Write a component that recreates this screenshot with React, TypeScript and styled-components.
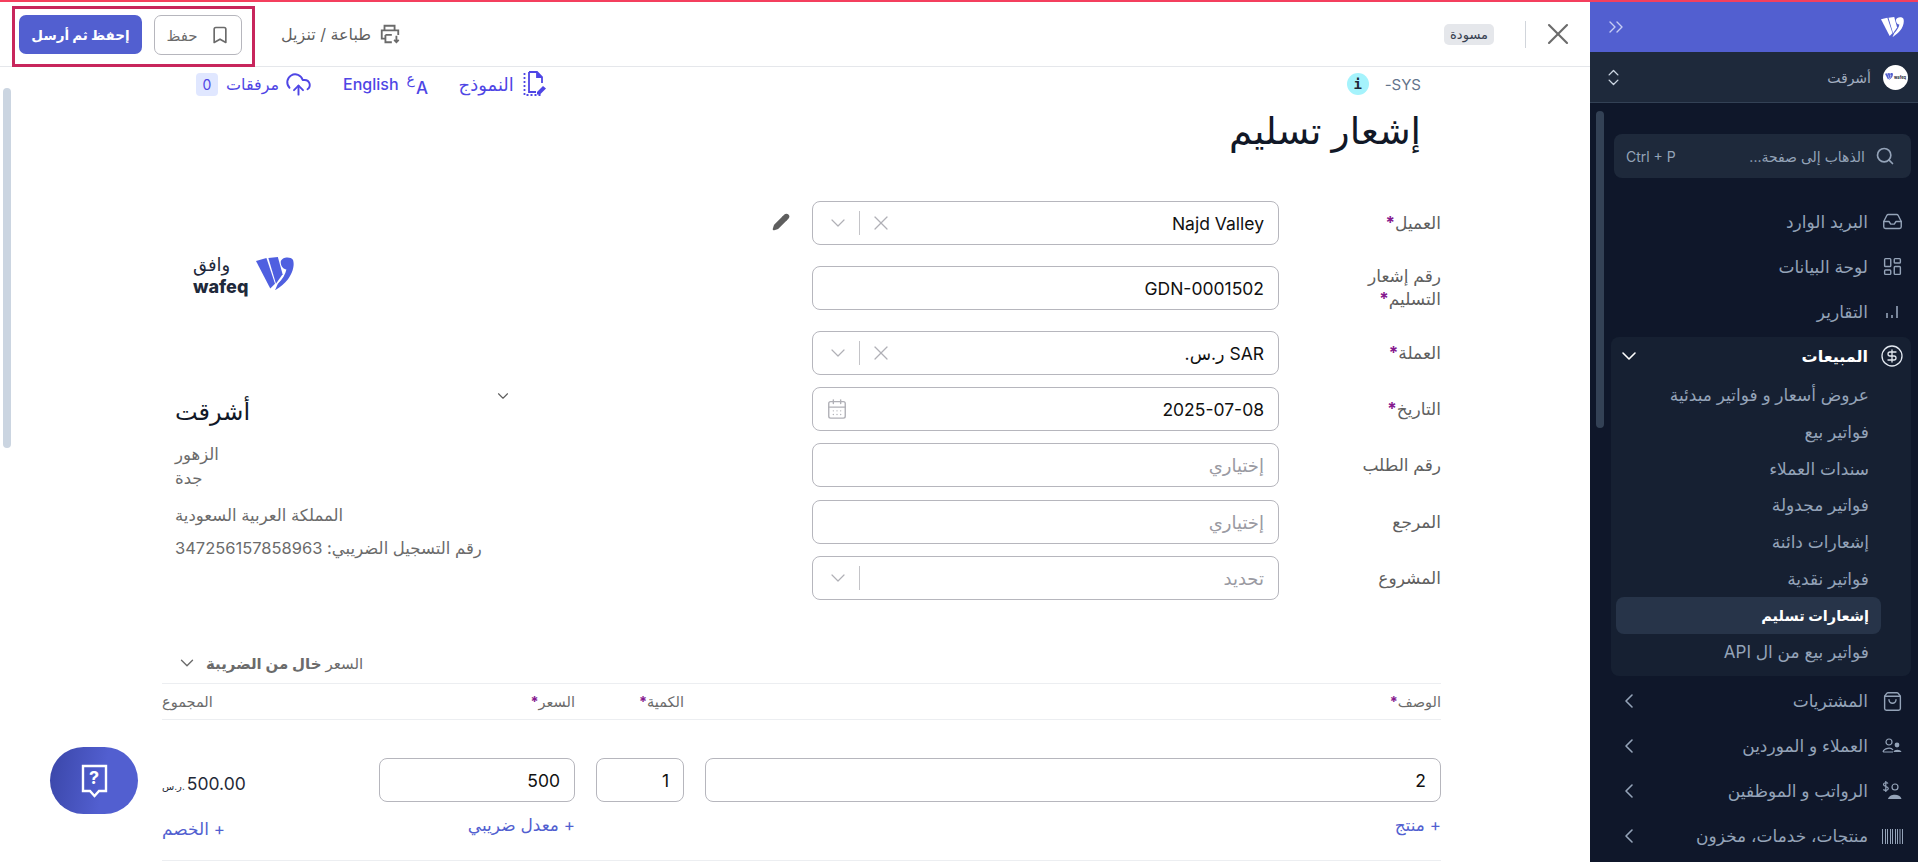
import styled, { createGlobalStyle } from 'styled-components';
import {
    Bookmark,
    CalendarDays,
    ChevronDown,
    ChevronLeft,
    ChevronsRight,
    ChevronsUpDown,
    CircleDollarSign,
    CloudUpload,
    Inbox,
    LayoutDashboard,
    Pencil,
    Search,
    ShoppingBag,
    X,
} from 'lucide-react';
import type { ReactNode } from 'react';

const GlobalStyle = createGlobalStyle`
    html, body {
        margin: 0;
        padding: 0;
        height: 100%;
        overflow: hidden;
        background: #fff;
    }
    * {
        box-sizing: border-box;
    }
    body {
        font-family: 'Inter', 'Noto Sans', 'DejaVu Sans', sans-serif;
    }
`;

// wafeq mark, drawn from the logo
const WafeqMark = ({ size, color }: { size: number; color: string }) => (
    <svg width={size} height={size * 0.88} viewBox="0 0 40 35" fill={color}>
        <path d="M0 4 L11 1 L20 28 L15 33 Z" />
        <path d="M13 1 L23 0 L28 18 L21 28 Z" />
        <path d="M26 5 C27 0 36 -1 39 3 C41 9 38 18 33 24 C30 28 26 31 20 35 L23 28 C28 23 31 18 32 13 C29 13 26 10 26 5 Z" />
    </svg>
);

const PrintDownloadIcon = () => (
    <svg width="22" height="22" viewBox="0 0 24 24" fill="none" stroke="#6b6b6b" strokeWidth="2">
        <path d="M6 8V3h11v5" />
        <path d="M7 17H3V8h18v5" />
        <path d="M7 13h7M7 13v8h7" />
        <path d="M19 14v7M16.5 18.5 19 21l2.5-2.5" />
    </svg>
);

const FormFileIcon = () => (
    <svg width="24" height="26" viewBox="0 0 24 26" fill="none" stroke="#4f46e5" strokeWidth="1.8">
        <path d="M7 1h8l5 5v6" />
        <path d="M15 1v5h5" fill="#4f46e5" />
        <path d="M7 1v20h7" />
        <path d="M2.500 2v22h16" strokeDasharray="2 2" />
        <path d="M15 21l6-6 3 2.500-6 6h-3z" fill="#4f46e5" stroke="none" />
    </svg>
);

const BarsIcon = () => (
    <svg width="16" height="16" viewBox="0 0 16 16" fill="none" stroke="#94a3b8" strokeWidth="1.6">
        <path d="M3 9v5M8 11v3M13 2v12" />
    </svg>
);

const BarcodeIcon = () => (
    <svg width="21" height="15" viewBox="0 0 21 15" fill="none" stroke="#94a3b8" strokeWidth="1">
        <path d="M.5 0v15M3.500 0v15M5.500 0v15M8.500 0v15M10.500 0v15M13.500 0v15M15.500 0v15M18 0v15M20.500 0v15" />
    </svg>
);

const CustomersIcon = () => (
    <svg width="20" height="16" viewBox="0 0 20 16" fill="none" stroke="#94a3b8" strokeWidth="1.2">
        <circle cx="7" cy="4" r="3" />
        <path d="M1 14c1-4 8-5 10-2M1 14h10" />
        <circle cx="15" cy="7" r="2.400" fill="#94a3b8" stroke="none" />
        <path d="M11.500 14c.5-3 7-3 8 0z" fill="#94a3b8" stroke="none" />
    </svg>
);

const PayrollIcon = () => (
    <svg width="20" height="20" viewBox="0 0 20 20" fill="none" stroke="#94a3b8" strokeWidth="1.2">
        <path d="M6 2.500C5 1.200 1.500 1.500 1.500 3.600c0 2.400 4.800 1.500 4.800 4 0 2-3.600 2.300-5 .9M3.800 0v11" />
        <circle cx="13" cy="6" r="3" />
        <path d="M6 18c1-5 12-6 13.500 0z" fill="#94a3b8" stroke="none" />
    </svg>
);

const HelpBubbleIcon = () => (
    <HelpGlyph>
        <svg width="27" height="34" viewBox="0 0 27 34" fill="none" stroke="#fff" strokeWidth="2.400">
            <path d="M2 2h23v25h-7l-4.500 5-4.500-5H2z" />
        </svg>
        <HelpMark>?</HelpMark>
    </HelpGlyph>
);

type NavEntry = { label: string; icon: ReactNode };

const topNav: NavEntry[] = [
    { label: 'البريد الوارد', icon: <Inbox size={21} strokeWidth={1.6} /> },
    { label: 'لوحة البيانات', icon: <LayoutDashboard size={21} strokeWidth={1.6} /> },
    { label: 'التقارير', icon: <BarsIcon /> },
];

const salesItems = [
    'عروض أسعار و فواتير مبدئية',
    'فواتير بيع',
    'سندات العملاء',
    'فواتير مجدولة',
    'إشعارات دائنة',
    'فواتير نقدية',
    'إشعارات تسليم',
    'فواتير بيع من ال API',
];

const bottomNav: NavEntry[] = [
    { label: 'المشتريات', icon: <ShoppingBag size={21} strokeWidth={1.6} /> },
    { label: 'العملاء و الموردين', icon: <CustomersIcon /> },
    { label: 'الرواتب و الموظفين', icon: <PayrollIcon /> },
    { label: 'منتجات، خدمات، مخزون', icon: <BarcodeIcon /> },
];

const SelectControls = ({ clearable }: { clearable?: boolean }) => (
    <Controls>
        {clearable && <X size={24} strokeWidth={1.2} />}
        <ControlDivider />
        <ChevronDown size={24} strokeWidth={1.2} />
    </Controls>
);

const App = () => {
    return (
        <Page dir="rtl">
            <GlobalStyle />
            <TopLine />
            <Shell>
                <Sidebar>
                    <BrandBar>
                        <WafeqMark size={23} color="#fff" />
                        <ChevronsRight size={24} strokeWidth={1.4} color="#c7cdf3" />
                    </BrandBar>
                    <AccountBar>
                        <Avatar>
                            <AvatarWord dir="ltr">wafeq</AvatarWord>
                            <WafeqMark size={8} color="#525fd0" />
                        </Avatar>
                        <AccountName>أشرقت</AccountName>
                        <ChevronsUpDown size={21} strokeWidth={1.6} color="#cbd5e1" />
                    </AccountBar>
                    <NavScroll>
                        <SideThumb />
                        <SearchBox>
                            <Search size={20} />
                            <SearchText>الذهاب إلى صفحة...</SearchText>
                            <Shortcut dir="ltr">Ctrl + P</Shortcut>
                        </SearchBox>
                        <NavList>
                            {topNav.map((entry) => (
                                <NavItem key={entry.label}>
                                    <NavIcon>{entry.icon}</NavIcon>
                                    <NavLabel>{entry.label}</NavLabel>
                                </NavItem>
                            ))}
                            <SalesGroup>
                                <SalesHead>
                                    <NavIcon>
                                        <CircleDollarSign size={24} color="#e2e8f0" strokeWidth={1.3} />
                                    </NavIcon>
                                    <SalesLabel>المبيعات</SalesLabel>
                                    <ChevronDown size={24} color="#fff" strokeWidth={1.6} />
                                </SalesHead>
                                {salesItems.map((label) => (
                                    <SubItem key={label} $active={label === 'إشعارات تسليم'}>
                                        {label}
                                    </SubItem>
                                ))}
                            </SalesGroup>
                            {bottomNav.map((entry) => (
                                <NavItem key={entry.label}>
                                    <NavIcon>{entry.icon}</NavIcon>
                                    <NavLabel>{entry.label}</NavLabel>
                                    <ChevronLeft size={24} color="#94a3b8" strokeWidth={1.6} />
                                </NavItem>
                            ))}
                        </NavList>
                    </NavScroll>
                </Sidebar>

                <Main>
                    <MainThumb />
                    <Header>
                        <CloseButton>
                            <X size={36} strokeWidth={1.4} />
                        </CloseButton>
                        <HeaderDivider />
                        <DraftBadge>مسودة</DraftBadge>
                        <HeaderActions>
                            <PrintLink>
                                <PrintDownloadIcon />
                                طباعة / تنزيل
                            </PrintLink>
                            <HighlightBox>
                                <SaveButton>
                                    <Bookmark size={20} strokeWidth={2} />
                                    حفظ
                                </SaveButton>
                                <SendButton>إحفظ ثم أرسل</SendButton>
                            </HighlightBox>
                        </HeaderActions>
                    </Header>

                    <Content>
                        <MetaRow>
                            <SysRef>
                                <span>SYS-</span>
                                <InfoDot>i</InfoDot>
                            </SysRef>
                            <MetaLinks>
                                <MetaLink $size={18}>
                                    <FormFileIcon />
                                    النموذج
                                </MetaLink>
                                <MetaLink>
                                    <LangGlyph>
                                        <LangAr>ع</LangAr>
                                        <LangEn>A</LangEn>
                                    </LangGlyph>
                                    English
                                </MetaLink>
                                <MetaLink $gap={6}>
                                    <CloudUpload size={27} strokeWidth={1.7} />
                                    مرفقات
                                    <CountBadge>0</CountBadge>
                                </MetaLink>
                            </MetaLinks>
                        </MetaRow>

                        <Title>إشعار تسليم</Title>

                        <FormGrid>
                            <FormColumn>
                                <FieldRow $after={21}>
                                    <FieldLabel>
                                        العميل<Req>*</Req>
                                    </FieldLabel>
                                    <InputBox>
                                        <Value>Najd Valley</Value>
                                        <SelectControls clearable />
                                    </InputBox>
                                    <EditSlot>
                                        <Pencil size={18} fill="#5f5f5f" stroke="#5f5f5f" />
                                    </EditSlot>
                                </FieldRow>
                                <FieldRow $after={21}>
                                    <FieldLabel>
                                        رقم إشعار التسليم<Req>*</Req>
                                    </FieldLabel>
                                    <InputBox>
                                        <Value>GDN-0001502</Value>
                                    </InputBox>
                                </FieldRow>
                                <FieldRow $after={12}>
                                    <FieldLabel>
                                        العملة<Req>*</Req>
                                    </FieldLabel>
                                    <InputBox>
                                        <Value>SAR ر.س.</Value>
                                        <SelectControls clearable />
                                    </InputBox>
                                </FieldRow>
                                <FieldRow $after={12}>
                                    <FieldLabel>
                                        التاريخ<Req>*</Req>
                                    </FieldLabel>
                                    <InputBox>
                                        <Value>2025-07-08</Value>
                                        <Controls>
                                            <CalendarDays size={22} strokeWidth={1.5} />
                                        </Controls>
                                    </InputBox>
                                </FieldRow>
                                <FieldRow $after={13}>
                                    <FieldLabel>رقم الطلب</FieldLabel>
                                    <InputBox>
                                        <Placeholder>إختياري</Placeholder>
                                    </InputBox>
                                </FieldRow>
                                <FieldRow $after={12}>
                                    <FieldLabel>المرجع</FieldLabel>
                                    <InputBox>
                                        <Placeholder>إختياري</Placeholder>
                                    </InputBox>
                                </FieldRow>
                                <FieldRow $after={0}>
                                    <FieldLabel>المشروع</FieldLabel>
                                    <InputBox>
                                        <Placeholder>تحديد</Placeholder>
                                        <SelectControls />
                                    </InputBox>
                                </FieldRow>
                            </FormColumn>

                            <CompanyColumn>
                                <LogoRow>
                                    <WafeqMark size={38} color="#4f5fe0" />
                                    <LogoWords>
                                        <LogoAr>وافق</LogoAr>
                                        <LogoEn dir="ltr">wafeq</LogoEn>
                                    </LogoWords>
                                </LogoRow>
                                <CompanyChevron>
                                    <ChevronDown size={18} strokeWidth={1.5} />
                                </CompanyChevron>
                                <CompanyName>أشرقت</CompanyName>
                                <CompanyLine>الزهور</CompanyLine>
                                <CompanyLine>جدة</CompanyLine>
                                <CompanyLine $top={13}>المملكة العربية السعودية</CompanyLine>
                                <CompanyLine $top={9}>رقم التسجيل الضريبي: 347256157858963</CompanyLine>
                            </CompanyColumn>
                        </FormGrid>

                        <TaxToggle>
                            السعر <strong>خال من الضريبة</strong>
                            <ChevronDown size={22} strokeWidth={1.5} />
                        </TaxToggle>

                        <LinesHead>
                            <span>
                                الوصف<Req>*</Req>
                            </span>
                            <span>
                                الكمية<Req>*</Req>
                            </span>
                            <span>
                                السعر<Req>*</Req>
                            </span>
                            <span />
                            <span>المجموع</span>
                        </LinesHead>

                        <LineRow>
                            <LineCell>
                                <InputBox>
                                    <Value>2</Value>
                                </InputBox>
                                <AddLink>+ منتج</AddLink>
                            </LineCell>
                            <LineCell>
                                <InputBox>
                                    <Value>1</Value>
                                </InputBox>
                            </LineCell>
                            <LineCell>
                                <InputBox>
                                    <Value>500</Value>
                                </InputBox>
                                <AddLink>+ معدل ضريبي</AddLink>
                            </LineCell>
                            <span />
                            <LineCell>
                                <TotalValue dir="ltr">
                                    <small>ر.س.</small>500.00
                                </TotalValue>
                                <DiscountLink>+ الخصم</DiscountLink>
                            </LineCell>
                        </LineRow>
                    </Content>

                    <HelpButton>
                        <HelpBubbleIcon />
                    </HelpButton>
                </Main>
            </Shell>
        </Page>
    );
};

const Page = styled.div`
    width: 1918px;
    height: 862px;
    overflow: hidden;
    display: flex;
    flex-direction: column;
`;
const TopLine = styled.div`
    height: 2px;
    flex: none;
    background: #f43f5e;
`;
const Shell = styled.div`
    flex: 1;
    min-height: 0;
    display: flex;
`;
const Sidebar = styled.aside`
    width: 328px;
    flex: none;
    background: #0f172a;
    display: flex;
    flex-direction: column;
`;
const BrandBar = styled.div`
    height: 50px;
    flex: none;
    background: #525fd0;
    display: flex;
    align-items: center;
    justify-content: space-between;
    padding-inline: 14px;
`;
const AccountBar = styled.div`
    height: 51px;
    flex: none;
    background: #1e293b;
    border-bottom: 1px solid #334155;
    display: flex;
    align-items: center;
    gap: 12px;
    padding-inline: 10px 13px;
`;
const Avatar = styled.div`
    width: 25px;
    height: 25px;
    border-radius: 50%;
    background: #fff;
    display: flex;
    align-items: center;
    justify-content: center;
    gap: 1px;
`;
const AvatarWord = styled.span`
    font-size: 4px;
    font-weight: 700;
    color: #1e293b;
`;
const AccountName = styled.div`
    flex: 1;
    font-size: 14px;
    color: #a3aec0;
`;
const NavScroll = styled.div`
    position: relative;
    flex: 1;
    min-height: 0;
    padding: 31px 7px 0 7px;
`;
const SideThumb = styled.div`
    position: absolute;
    left: 6px;
    top: 8px;
    width: 8px;
    height: 317px;
    border-radius: 4px;
    background: #334155;
`;
const SearchBox = styled.div`
    height: 44px;
    margin-inline: 0 17px;
    display: flex;
    align-items: center;
    gap: 10px;
    padding-inline: 16px 12px;
    border-radius: 8px;
    background: #1e293b;
    color: #94a3b8;
`;
const SearchText = styled.div`
    flex: 1;
    font-size: 14px;
`;
const Shortcut = styled.div`
    font-size: 14px;
`;
const NavList = styled.div`
    margin-top: 21px;
    display: flex;
    flex-direction: column;
`;
const NavItem = styled.div`
    height: 45px;
    display: flex;
    align-items: center;
    gap: 12px;
    padding-inline: 7px 3px;
    margin-inline: 0 17px;
    color: #94a3b8;
`;
const NavIcon = styled.span`
    width: 24px;
    flex: none;
    display: flex;
    align-items: center;
    justify-content: center;
`;
const NavLabel = styled.span`
    flex: 1;
    font-size: 17px;
`;
const SalesLabel = styled.span`
    flex: 1;
    font-size: 16px;
`;
const SalesGroup = styled.div`
    margin: 3px 0;
    margin-inline: 0 14px;
    padding-bottom: 5px;
    border-radius: 8px;
    background: #162032;
`;
const SalesHead = styled.div`
    height: 38px;
    margin-bottom: 2px;
    display: flex;
    align-items: center;
    gap: 12px;
    padding-inline: 7px 6px;
    color: #fff;
    font-weight: 600;
`;
const SubItem = styled.div<{ $active?: boolean }>`
    height: 36.7px;
    margin-inline: 30px 5px;
    padding-inline: 12px;
    border-radius: 8px;
    display: flex;
    align-items: center;
    font-size: ${({ $active }) => ($active ? 14.5 : 17)}px;
    font-weight: ${({ $active }) => ($active ? 600 : 400)};
    color: ${({ $active }) => ($active ? '#fff' : '#94a3b8')};
    background: ${({ $active }) => ($active ? '#273449' : 'transparent')};
`;
const Main = styled.main`
    position: relative;
    flex: 1;
    min-width: 0;
    display: flex;
    flex-direction: column;
`;
const MainThumb = styled.div`
    position: absolute;
    left: 3px;
    top: 86px;
    width: 8px;
    height: 360px;
    border-radius: 4px;
    background: #cbd5e1;
`;
const Header = styled.header`
    height: 65px;
    flex: none;
    border-bottom: 1px solid #e5e7eb;
    display: flex;
    align-items: center;
    padding-inline: 14px 12px;
`;
const CloseButton = styled.div`
    display: flex;
    color: #6b6b6b;
`;
const HeaderDivider = styled.div`
    width: 1px;
    height: 27px;
    margin-inline: 14px 31px;
    background: #d1d5db;
`;
const DraftBadge = styled.div`
    width: 50px;
    height: 21px;
    border-radius: 5px;
    background: #e5e7eb;
    color: #374151;
    font-size: 13px;
    display: flex;
    align-items: center;
    justify-content: center;
`;
const HeaderActions = styled.div`
    margin-inline-start: auto;
    align-self: stretch;
    display: flex;
    align-items: center;
    gap: 26px;
`;
const PrintLink = styled.div`
    display: flex;
    align-items: center;
    gap: 8px;
    color: #5f5f5f;
    font-size: 16px;
`;
const HighlightBox = styled.div`
    align-self: flex-end;
    display: flex;
    align-items: flex-start;
    gap: 12px;
    height: 61px;
    margin-bottom: -1px;
    padding: 9px 13px 0 7px;
    outline: 3px solid #c8265c;
    outline-offset: -3px;
`;
const SaveButton = styled.div`
    width: 88px;
    height: 40px;
    border: 1px solid #b6b6bd;
    border-radius: 7px;
    display: flex;
    align-items: center;
    justify-content: center;
    gap: 12px;
    color: #6b6b6b;
    font-size: 15px;
`;
const SendButton = styled.div`
    width: 123px;
    height: 39px;
    border-radius: 7px;
    background: #525fd0;
    color: #fff;
    font-size: 13.5px;
    font-weight: 700;
    display: flex;
    align-items: center;
    justify-content: center;
`;
const Content = styled.div`
    padding-inline: 149px 162px;
    flex: 1;
    min-height: 0;
`;
const MetaRow = styled.div`
    height: 34px;
    display: flex;
    align-items: center;
    justify-content: space-between;
    padding-inline: 20px 0;
`;
const SysRef = styled.div`
    display: flex;
    align-items: center;
    gap: 16px;
    color: #64748b;
    font-size: 15px;
`;
const InfoDot = styled.span`
    width: 22px;
    height: 22px;
    border-radius: 50%;
    background: #a5f3fc;
    color: #1f2937;
    font-family: 'DejaVu Sans Mono', monospace;
    font-weight: 700;
    font-size: 14px;
    display: flex;
    align-items: center;
    justify-content: center;
`;
const MetaLinks = styled.div`
    display: flex;
    align-items: center;
    gap: 31px;
    margin-inline-end: 34px;
`;
const MetaLink = styled.div<{ $size?: number; $gap?: number }>`
    display: flex;
    align-items: center;
    gap: ${({ $gap }) => $gap ?? 8}px;
    color: #4f46e5;
    font-size: ${({ $size }) => $size ?? 16}px;
    font-weight: 500;
`;
const LangGlyph = styled.span`
    width: 21px;
    height: 24px;
    display: flex;
    direction: ltr;
`;
const LangAr = styled.span`
    font-size: 14px;
    line-height: 14px;
`;
const LangEn = styled.span`
    font-size: 17px;
    line-height: 16px;
    margin-top: 8px;
    margin-left: 1px;
`;
const CountBadge = styled.span`
    width: 22px;
    height: 23px;
    margin-inline-start: 2px;
    border-radius: 4px;
    background: #e0e7ff;
    display: flex;
    align-items: center;
    justify-content: center;
    font-size: 14px;
    font-weight: 400;
`;
const Title = styled.h1`
    margin: 5px 20px 0 0;
    height: 95px;
    font-size: 37.5px;
    font-weight: 500;
    line-height: 50px;
    color: #111827;
`;
const FormGrid = styled.div`
    display: flex;
    justify-content: space-between;
`;
const FormColumn = styled.div`
    width: 629px;
    display: flex;
    flex-direction: column;
`;
const FieldRow = styled.div<{ $after: number }>`
    position: relative;
    display: flex;
    align-items: center;
    height: 44px;
    margin-bottom: ${({ $after }) => $after}px;
`;
const FieldLabel = styled.label`
    width: 162px;
    flex: none;
    padding-inline-end: 60px;
    font-size: 17px;
    line-height: 23px;
    color: #5f5f5f;
`;
const Req = styled.span`
    color: #86198f;
    font-weight: 700;
`;
const InputBox = styled.div`
    flex: 1;
    min-width: 0;
    height: 44px;
    border: 1px solid #b6b6bd;
    border-radius: 8px;
    display: flex;
    align-items: center;
    justify-content: space-between;
    padding-inline: 14px 13px;
    background: #fff;
`;
const Value = styled.span`
    font-size: 17.5px;
    color: #111;
`;
const Placeholder = styled.span`
    font-size: 18px;
    color: #9a9aa2;
`;
const Controls = styled.span`
    display: flex;
    align-items: center;
    gap: 9px;
    color: #b0b0b6;
`;
const ControlDivider = styled.span`
    width: 1px;
    height: 24px;
    background: #c4c4c8;
`;
const EditSlot = styled.span`
    position: absolute;
    left: -40px;
    top: 12px;
    display: flex;
    color: #5f5f5f;
`;
const CompanyColumn = styled.div`
    position: relative;
    width: 336px;
    margin-inline-end: 13px;
    padding-top: 56px;
    text-align: left;
`;
const LogoRow = styled.div`
    height: 137px;
    display: flex;
    justify-content: flex-end;
    gap: 8px;
    margin-inline-end: 18px;
`;
const LogoWords = styled.div`
    display: flex;
    flex-direction: column;
    align-items: flex-end;
    margin-top: -4px;
    color: #1e293b;
`;
const LogoAr = styled.span`
    font-size: 18px;
    line-height: 24px;
`;
const LogoEn = styled.span`
    font-size: 18px;
    font-weight: 800;
    line-height: 20px;
`;
const CompanyChevron = styled.span`
    position: absolute;
    right: -1px;
    top: 186px;
    display: flex;
    color: #5f5f5f;
`;
const CompanyName = styled.div`
    font-size: 24px;
    font-weight: 500;
    line-height: 36px;
    color: #111827;
    margin-bottom: 12px;
`;
const CompanyLine = styled.div<{ $top?: number }>`
    font-size: 16.5px;
    line-height: 24px;
    color: #6b6b6b;
    margin-top: ${({ $top }) => $top ?? 0}px;
`;
const TaxToggle = styled.div`
    margin-top: 49px;
    height: 28px;
    display: flex;
    align-items: center;
    justify-content: flex-end;
    gap: 4px;
    padding-inline-end: 14px;
    font-size: 15px;
    color: #6b6b6b;
    strong {
        font-weight: 600;
    }
    svg {
        margin-inline-start: 4px;
    }
`;
const LinesHead = styled.div`
    margin-top: 6px;
    height: 37px;
    display: grid;
    grid-template-columns: 736px 88px 196px 1fr 86px;
    column-gap: 21px;
    align-items: center;
    border-block: 1px solid #eceef1;
    font-size: 14.5px;
    color: #6b6b6b;
    > :last-child {
        text-align: left;
    }
`;
const LineRow = styled.div`
    height: 141px;
    padding-top: 38px;
    display: grid;
    grid-template-columns: 736px 88px 196px 1fr 86px;
    column-gap: 21px;
    border-bottom: 1px solid #eceef1;
`;
const LineCell = styled.div`
    display: flex;
    flex-direction: column;
    ${InputBox} {
        flex: none;
    }
`;
const AddLink = styled.div`
    margin-top: 13px;
    font-size: 17px;
    line-height: 20px;
    color: #525fd0;
`;
const DiscountLink = styled(AddLink)`
    margin-top: 11px;
    text-align: left;
`;
const TotalValue = styled.div`
    height: 50px;
    display: flex;
    align-items: center;
    justify-content: flex-start;
    gap: 2px;
    font-size: 17.5px;
    color: #1f2937;
    small {
        font-size: 10px;
        align-self: flex-end;
        margin-bottom: 16px;
    }
`;
const HelpButton = styled.div`
    position: absolute;
    left: 50px;
    top: 745px;
    width: 88px;
    height: 67px;
    border-radius: 36px;
    background: linear-gradient(100deg, #3a46a8, #525fd0 60%);
    display: flex;
    align-items: center;
    justify-content: center;
`;
const HelpGlyph = styled.span`
    position: relative;
    display: flex;
`;
const HelpMark = styled.span`
    position: absolute;
    inset: 0 0 6px 0;
    display: flex;
    align-items: center;
    justify-content: center;
    color: #fff;
    font-size: 18px;
    font-weight: 700;
`;

export default App;
